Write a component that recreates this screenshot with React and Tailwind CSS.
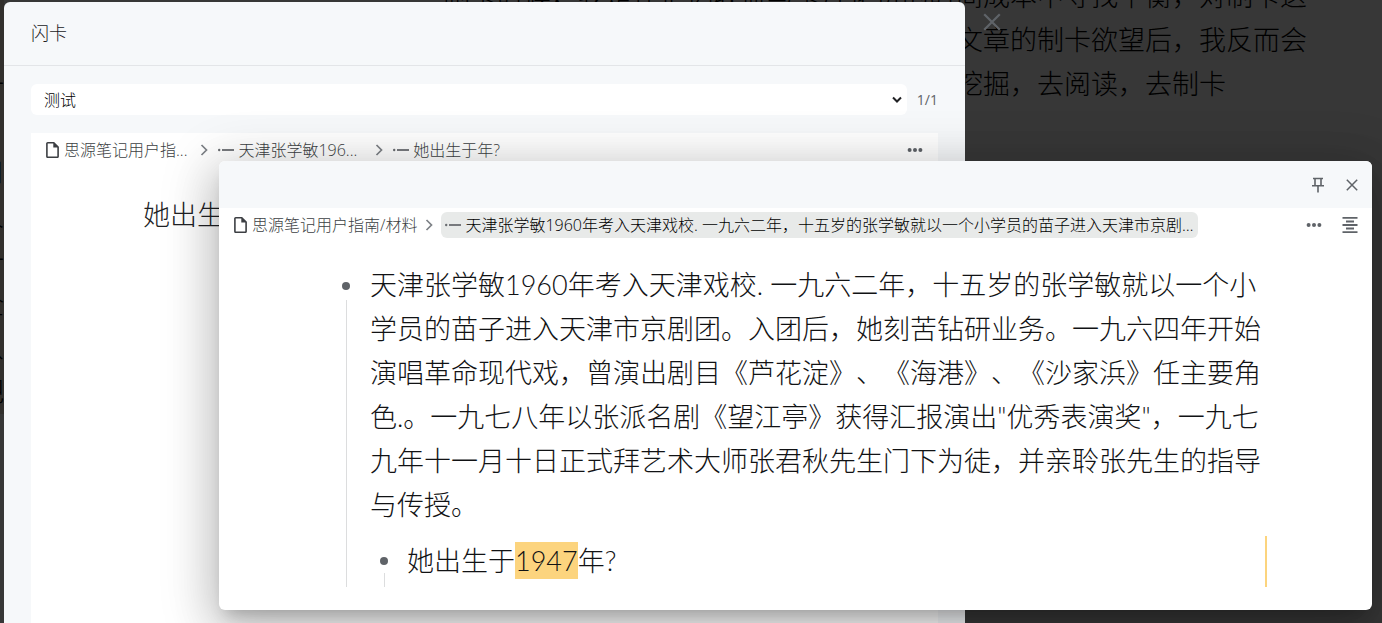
const FileIcon = () => (
  <svg viewBox="4 2 16 20" className="h-4 w-[13px] shrink-0" fill="currentColor" aria-hidden="true">
    <path d="M14 2H6c-1.1 0-2 .9-2 2v16c0 1.1.9 2 2 2h12c1.1 0 2-.9 2-2V8l-6-6zM6 20V4h7v5h5v11H6z" />
  </svg>
);

const ChevronIcon = () => (
  <svg viewBox="0 0 8 12" className="h-3 w-2 shrink-0 text-[#7d8186]" fill="none" stroke="currentColor" strokeWidth="1.7" aria-hidden="true">
    <path d="M1.5 1 6.5 6l-5 5" />
  </svg>
);

const ItemIcon = () => (
  <svg viewBox="0 0 16 16" className="size-4 shrink-0 text-[#6a6d71]" fill="currentColor" aria-hidden="true">
    <circle cx="1.2" cy="8" r="1.2" />
    <rect x="4" y="7" width="12" height="2" opacity=".9" />
  </svg>
);

const MoreIcon = () => (
  <svg viewBox="0 0 16 16" className="size-4 text-[#5f6368]" fill="currentColor" aria-hidden="true">
    <circle cx="2.6" cy="8" r="2" />
    <circle cx="8" cy="8" r="2" />
    <circle cx="13.4" cy="8" r="2" />
  </svg>
);

const PinIcon = () => (
  <svg viewBox="0 0 12 16" className="h-4 w-3" fill="none" stroke="currentColor" strokeWidth="1.6" aria-hidden="true">
    <path d="M1 1.5h10M3 1.5v6.5M9 1.5v6.5M0 8.8h12M6 9v6.5" />
  </svg>
);

const CloseIcon = ({ className }) => (
  <svg viewBox="0 0 12 12" className={className} fill="none" stroke="currentColor" strokeWidth="1.5" aria-hidden="true">
    <path d="M.8.8l10.4 10.4M11.2.8.8 11.2" />
  </svg>
);

const AlignIcon = () => (
  <svg viewBox="0 0 16 16" className="size-4 text-[#5f6368]" fill="none" stroke="currentColor" strokeWidth="1.8" aria-hidden="true">
    <path d="M.5.9h15M4 4.5h8M.5 8h15M4 11.5h8M.5 15.1h15" />
  </svg>
);

const margin = ["一", "日", "口", "人", "一", "全", "从", "把"];

const article = [
  "制卡时候\uFF0C我是在记忆收益与卡片花费的时间成本中寻找平衡\uFF0C对制卡这",
  "件事保持克制。当我放下了想要为每一篇好文章的制卡欲望后\uFF0C我反而会",
  "更自在地面对眼前的材料\uFF0C按自己的兴趣去挖掘\uFF0C去阅读\uFF0C去制卡",
];

const opening =
  "天津张学敏1960年考入天津戏校. 一九六二年\uFF0C十五岁的张学敏就以一个小学员的苗子进入天津市京剧团。入团后\uFF0C她刻苦钻研业务。";

const rest =
  '一九六四年开始演唱革命现代戏\uFF0C曾演出剧目《芦花淀》、《海港》、《沙家浜》任主要角色.。一九七八年以张派名剧《望江亭》获得汇报演出"优秀表演奖"\uFF0C一九七九年十一月十日正式拜艺术大师张君秋先生门下为徒\uFF0C并亲聆张先生的指导与传授。';

export default function App() {
  return (
    <div lang="zh-CN" className="relative min-h-screen overflow-hidden bg-[#373737] font-['Open_Sans','Noto_Sans_CJK_SC',sans-serif] text-base text-[#5f6368]">
      <main className="flex font-['Lato','Noto_Sans_CJK_SC',sans-serif] text-[27px] leading-[44px] font-light text-black [text-spacing-trim:space-all]">
        <div className="w-1 overflow-hidden bg-[#32302d] pt-[62px]">
          {margin.map((c, i) => (
            <div key={i} className="flex justify-end">{c}</div>
          ))}
        </div>
        <div className="-mt-[26px] flex-1 pr-[75px] text-right whitespace-nowrap">
          <div className="inline-block text-left">
            {article.map((line) => (
              <p key={line}>{line}</p>
            ))}
          </div>
        </div>
      </main>

      <section aria-label="闪卡" className="absolute top-0.5 right-[417px] bottom-0 left-1 flex flex-col rounded-t-md bg-[#f6f8fa]">
        <h1 className="border-b border-[#e3e5e8] px-[27px] py-5 text-lg leading-[23px] font-light text-[#202124]">闪卡</h1>
        <div className="flex flex-1 flex-col px-[27px] pt-[18px]">
          <div className="flex items-center gap-2.5">
            <div className="relative flex-1">
              <select aria-label="卡包" className="h-[31px] w-full appearance-none rounded-md bg-white pl-[13px] font-light text-black">
                <option>测试</option>
              </select>
              <svg viewBox="0 0 10 8" className="pointer-events-none absolute top-3 right-[5px] h-2 w-2.5" fill="none" stroke="#202124" strokeWidth="2" aria-hidden="true">
                <path d="M1 1.5l4 4 4-4" />
              </svg>
            </div>
            <span className="text-sm">1/1</span>
          </div>
          <div className="mt-[18px] flex-1 bg-white">
            <nav aria-label="路径" className="flex h-[34px] items-center px-[15px] font-light text-[#3c3f43]">
              <FileIcon />
              <span className="mr-[13px] ml-[5px]">思源笔记用户指...</span>
              <ChevronIcon />
              <span className="mr-1 ml-2.5 flex"><ItemIcon /></span>
              <span className="mr-[18px]">天津张学敏196...</span>
              <ChevronIcon />
              <span className="mr-1 ml-2.5 flex"><ItemIcon /></span>
              <span>她出生于年?</span>
              <button aria-label="更多" className="ml-auto"><MoreIcon /></button>
            </nav>
            <p className="mt-[26px] ml-[112px] font-['Lato','Noto_Sans_CJK_SC',sans-serif] text-[27px] leading-[44px] font-light text-[#202124]">她出生于年?</p>
          </div>
        </div>
        <button aria-label="关闭" className="absolute top-[11px] -right-9 text-[#5f6368]">
          <CloseIcon className="size-[18px]" />
        </button>
      </section>

      <section aria-label="预览" className="absolute top-[161px] right-2.5 left-[219px] rounded-md bg-white pb-[23px] shadow-[0_11px_15px_-7px_rgba(0,0,0,0.2),0_16px_46px_3px_rgba(0,0,0,0.16),0_9px_54px_10px_rgba(0,0,0,0.14)]">
        <header className="flex h-[47px] items-center justify-end gap-[22px] rounded-t-md bg-[#f6f8fa] pr-3.5">
          <button aria-label="固定"><PinIcon /></button>
          <button aria-label="关闭"><CloseIcon className="size-3" /></button>
        </header>
        <div className="flex h-[34px] items-center pr-3.5 pl-[15px] font-light text-[#3c3f43]">
          <FileIcon />
          <span className="mr-2 ml-[5px] shrink-0">思源笔记用户指南/材料</span>
          <ChevronIcon />
          <span className="mr-[108px] ml-2 flex h-[26px] min-w-0 items-center gap-1 rounded-md bg-[#e8eae9] pr-0.5 pl-1">
            <ItemIcon />
            <span className="truncate text-black [text-spacing-trim:space-all]">{opening}</span>
          </span>
          <button aria-label="更多" className="mr-5 ml-auto"><MoreIcon /></button>
          <button aria-label="对齐"><AlignIcon /></button>
        </div>
        <ul className="mt-[21px] mr-[105px] ml-[122px] font-['Lato','Noto_Sans_CJK_SC',sans-serif] text-[27px] leading-[44px] font-light text-[#111214] [text-spacing-trim:space-all]">
          <li className="flex">
            <div className="flex w-[29px] shrink-0 flex-col gap-2.5 pt-[19px]">
              <span className="ml-px size-2 rounded-full bg-[#5f6368]" />
              <span className="ml-[5px] w-px flex-1 bg-[#dcddde]" />
            </div>
            <div className="min-w-0 flex-1">
              <p>{opening}{rest}</p>
              <ul className="mt-[9px]">
                <li className="flex border-r-2 border-[#fcd47e]">
                  <div className="ml-2.5 flex w-[27px] shrink-0 flex-col gap-2 pt-[21px]">
                    <span className="size-2 rounded-full bg-[#5f6368]" />
                    <span className="ml-1 w-px flex-1 bg-[#dcddde]" />
                  </div>
                  <p className="pt-[3px] pb-1">她出生于<mark className="bg-[#fcd47e] py-0.5 text-[#111214]">1947</mark>年?</p>
                </li>
              </ul>
            </div>
          </li>
        </ul>
      </section>
    </div>
  );
}
